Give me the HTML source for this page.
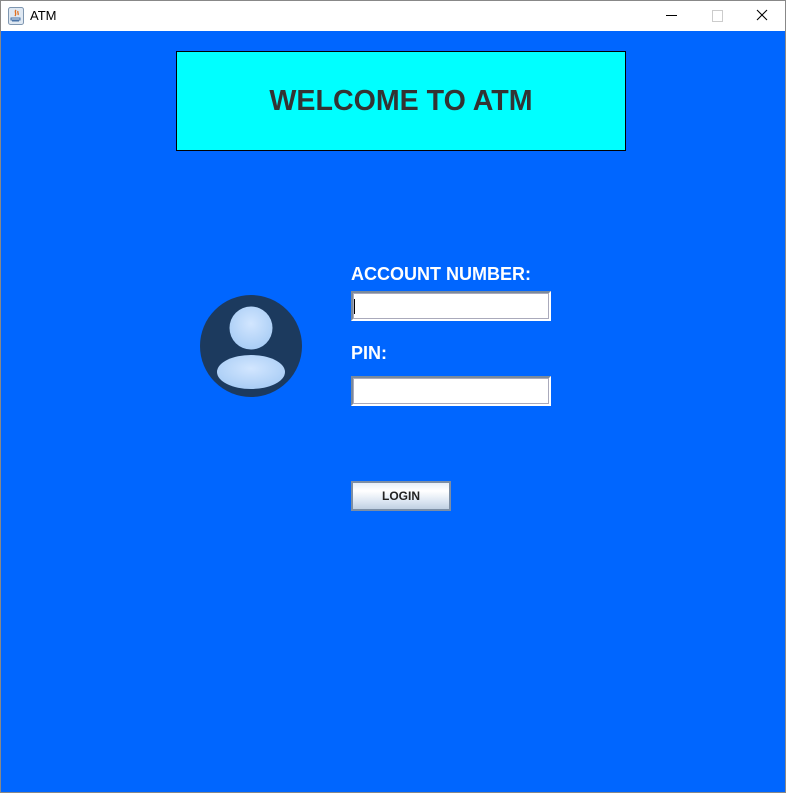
<!DOCTYPE html>
<html><head><style>
body{margin:0;width:786px;height:793px;position:relative;overflow:hidden;font-family:"Liberation Sans",sans-serif;background:#fff}
.win{position:absolute;left:0;top:0;width:784px;height:791px;border:1px solid #888}
.title{position:absolute;left:0;top:0;width:784px;height:30px;background:#fff}
.blue{position:absolute;left:0;top:30px;width:784px;height:761px;background:#0066ff}
.abs{position:absolute}
.lbl{position:absolute;color:#fff;font-weight:bold;font-size:18px}
.fld{position:absolute;width:196px;height:26px;background:#fff;border:2px solid;border-color:#7a8a9c #fff #fff #7a8a9c;box-shadow:inset 0 0 0 1px #aab}
</style></head><body>
<div class="win">
<div class="title">
<svg class="abs" style="left:7px;top:6px" width="16" height="18" viewBox="0 0 16 18"><rect x="0.5" y="0.5" width="15" height="17" rx="2" fill="#dfe8f2" stroke="#7e96b0"/><path d="M8 3c-2 2 1 3-1 6M10 4c-1 2 1 2 0 4" stroke="#e07020" fill="none" stroke-width="1.3"/><path d="M3 11h9v2H3zM4 14h7" stroke="#4a74a8" fill="none"/></svg>
<div class="abs" style="left:29px;top:7px;font-size:13px;color:#000">ATM</div>
<div class="abs" style="left:665px;top:14px;width:11px;height:1px;background:#000"></div>
<div class="abs" style="left:711px;top:9px;width:9px;height:10px;border:1px solid #ccc"></div>
<svg class="abs" style="left:755px;top:8px" width="12" height="12"><path d="M1 1L11 11M11 1L1 11" stroke="#000" stroke-width="1.1"/></svg>
</div>
<div class="blue"></div>
<div class="abs" style="left:175px;top:50px;width:448px;height:98px;background:#00ffff;border:1px solid #000;text-align:center;line-height:98px;font-weight:bold;font-size:28.6px;color:#333">WELCOME TO ATM</div>
<svg class="abs" style="left:198px;top:293px" width="104" height="104" viewBox="0 0 104 104">
<defs><radialGradient id="g" cx="50%" cy="40%" r="60%"><stop offset="0" stop-color="#d2e6ff"/><stop offset="1" stop-color="#a9cdf5"/></radialGradient></defs>
<circle cx="52" cy="52" r="51" fill="#1c3a5e"/>
<circle cx="52" cy="34" r="21.5" fill="url(#g)"/>
<ellipse cx="52" cy="78" rx="34" ry="17" fill="url(#g)"/>
</svg>
<div class="lbl" style="left:350px;top:263px">ACCOUNT NUMBER:</div>
<div class="fld" style="left:350px;top:290px"><div class="abs" style="left:1px;top:6px;width:1px;height:15px;background:#000"></div></div>
<div class="lbl" style="left:350px;top:342px">PIN:</div>
<div class="fld" style="left:350px;top:375px"></div>
<div class="abs" style="left:350px;top:480px;width:96px;height:26px;border:2px solid #7c8ea4;background:linear-gradient(#e6eef8,#fff 30%,#dce6f2 70%,#c0d0e2);text-align:center;line-height:26px;font-size:12px;font-weight:bold;color:#222">LOGIN</div>
</div>
</body></html>
